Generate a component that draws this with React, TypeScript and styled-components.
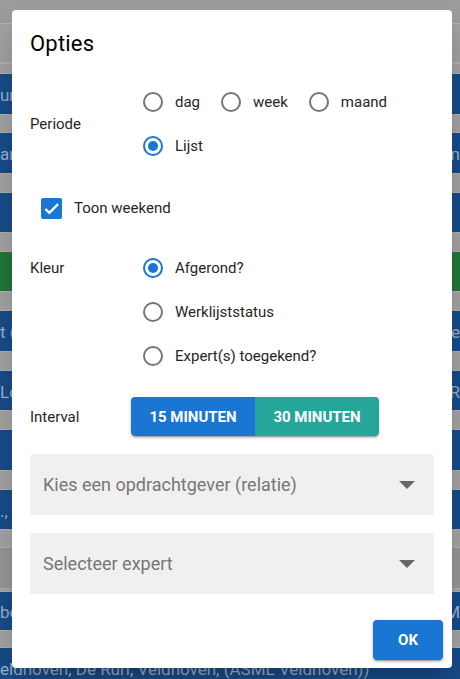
import styled, { createGlobalStyle } from 'styled-components';

const GlobalStyle = createGlobalStyle`
    body {
        margin: 0;
        font-family: Roboto, 'Liberation Sans', sans-serif;
        overflow: hidden;
    }
`;

type BandKind = 'head' | 'bar' | 'sep' | 'blue' | 'green' | 'dim';

interface Band {
    h: number;
    kind: BandKind;
    left?: string;
    right?: string;
}

const bands: Band[] = [
    { h: 23, kind: 'head' },
    { h: 40, kind: 'bar' },
    { h: 11, kind: 'sep' },
    { h: 40, kind: 'blue', left: 'urg' },
    { h: 19, kind: 'sep' },
    { h: 40, kind: 'blue', left: 'ar', right: 'en' },
    { h: 20, kind: 'sep' },
    { h: 39, kind: 'blue' },
    { h: 20, kind: 'sep' },
    { h: 39, kind: 'green' },
    { h: 20, kind: 'sep' },
    { h: 40, kind: 'blue', left: 't (', right: 'ne' },
    { h: 20, kind: 'sep' },
    { h: 39, kind: 'blue', left: 'Lo', right: 'R' },
    { h: 20, kind: 'sep' },
    { h: 40, kind: 'blue' },
    { h: 20, kind: 'sep' },
    { h: 39, kind: 'blue', left: '., 2' },
    { h: 19, kind: 'sep' },
    { h: 40, kind: 'dim' },
    { h: 4, kind: 'sep' },
    { h: 38, kind: 'blue', left: 'bo', right: 'M' },
    { h: 18, kind: 'sep' },
    { h: 40, kind: 'blue', left: 'eldhoven, De Ruri, Veldhoven, (ASML Veldhoven))' },
];

const bandColors: Record<BandKind, string> = {
    head: '#9c9c9c',
    bar: '#a2a2a2',
    sep: '#a5a5a5',
    blue: '#184d8b',
    green: '#23783a',
    dim: '#989898',
};

const App = () => {
    return (
        <>
            <GlobalStyle />
            <Page>
                <Backdrop>
                    {bands.map((b, i) => (
                        <BandRow key={i} $kind={b.kind} style={{ height: b.h }}>
                            <BandText>{b.left}</BandText>
                            <BandText>{b.right}</BandText>
                        </BandRow>
                    ))}
                </Backdrop>

                <Dialog>
                    <Title>Opties</Title>

                    <Section $align='center' $top={22}>
                        <FieldLabel>Periode</FieldLabel>
                        <Options>
                            <OptionLine>
                                <RadioItem label='dag' />
                                <RadioItem label='week' />
                                <RadioItem label='maand' />
                            </OptionLine>
                            <OptionLine>
                                <RadioItem label='Lijst' checked />
                            </OptionLine>
                        </Options>
                    </Section>

                    <CheckRow>
                        <CheckBox>
                            <svg width='21' height='21' viewBox='0 0 24 24'>
                                <path
                                    d='M5 12.5l4.5 4.5L19.5 7'
                                    fill='none'
                                    stroke='#fff'
                                    strokeWidth='2.6'
                                />
                            </svg>
                        </CheckBox>
                        <ItemText>Toon weekend</ItemText>
                    </CheckRow>

                    <Section $align='start' $top={16}>
                        <FieldLabel $pad>Kleur</FieldLabel>
                        <Options>
                            <OptionLine>
                                <RadioItem label='Afgerond?' checked />
                            </OptionLine>
                            <OptionLine>
                                <RadioItem label='Werklijststatus' />
                            </OptionLine>
                            <OptionLine>
                                <RadioItem label='Expert(s) toegekend?' />
                            </OptionLine>
                        </Options>
                    </Section>

                    <IntervalRow>
                        <FieldLabel>Interval</FieldLabel>
                        <ToggleGroup>
                            <ToggleButton $color='#1976d2'>15 Minuten</ToggleButton>
                            <ToggleButton $color='#26a69a'>30 Minuten</ToggleButton>
                        </ToggleGroup>
                    </IntervalRow>

                    <SelectField $top={18}>
                        <SelectText>Kies een opdrachtgever (relatie)</SelectText>
                        <Caret />
                    </SelectField>
                    <SelectField $top={18}>
                        <SelectText>Selecteer expert</SelectText>
                        <Caret />
                    </SelectField>

                    <Footer>
                        <OkButton>OK</OkButton>
                    </Footer>
                </Dialog>
            </Page>
        </>
    );
};

const RadioItem = ({ label, checked }: { label: string; checked?: boolean }) => (
    <RadioWrap>
        <RadioCircle $checked={!!checked}>{checked && <RadioDot />}</RadioCircle>
        <ItemText>{label}</ItemText>
    </RadioWrap>
);

const Page = styled.div`
    position: relative;
    width: 460px;
    height: 679px;
    overflow: hidden;
`;

const Backdrop = styled.div`
    display: flex;
    flex-direction: column;
`;

const BandRow = styled.div<{ $kind: BandKind }>`
    display: flex;
    justify-content: space-between;
    align-items: center;
    flex-shrink: 0;
    background: ${(p) => bandColors[p.$kind]};
    box-shadow: ${(p) =>
        p.$kind === 'sep' || p.$kind === 'bar'
            ? 'inset 0 1px 0 #b2b2b2, inset 0 -1px 0 #b2b2b2'
            : 'none'};
`;

const BandText = styled.span`
    font-size: 17px;
    color: #9db3d0;
    white-space: nowrap;
    padding-top: 2px;
`;

const Dialog = styled.div`
    position: absolute;
    left: 12px;
    top: 10px;
    width: 440px;
    height: 658px;
    box-sizing: border-box;
    padding: 0 9px 0 18px;
    background: #fff;
    border-radius: 4px;
    box-shadow: 0 11px 15px -7px rgba(0, 0, 0, 0.2), 0 24px 38px 3px rgba(0, 0, 0, 0.14);
    display: flex;
    flex-direction: column;
`;

const Title = styled.div`
    margin-top: 20px;
    font-size: 22px;
    line-height: 28px;
    font-weight: 400;
    color: #000;
    letter-spacing: 0.2px;
`;

const Section = styled.div<{ $align: string; $top: number }>`
    display: grid;
    grid-template-columns: 113px 1fr;
    align-items: ${(p) => p.$align};
    margin-top: ${(p) => p.$top}px;
`;

const FieldLabel = styled.div<{ $pad?: boolean }>`
    font-size: 15px;
    color: #262626;
    line-height: ${(p) => (p.$pad ? '44px' : 'normal')};
`;

const Options = styled.div`
    display: flex;
    flex-direction: column;
`;

const OptionLine = styled.div`
    display: flex;
    align-items: center;
    gap: 21px;
    height: 44px;
`;

const RadioWrap = styled.label`
    display: flex;
    align-items: center;
    gap: 12px;
`;

const RadioCircle = styled.span<{ $checked: boolean }>`
    width: 20px;
    height: 20px;
    box-sizing: border-box;
    border-radius: 50%;
    border: 2px solid ${(p) => (p.$checked ? '#1976d2' : '#757575')};
    display: flex;
    align-items: center;
    justify-content: center;
`;

const RadioDot = styled.span`
    width: 10px;
    height: 10px;
    border-radius: 50%;
    background: #1976d2;
`;

const ItemText = styled.span`
    font-size: 15px;
    color: #262626;
`;

const CheckRow = styled.div`
    display: flex;
    align-items: center;
    gap: 12px;
    height: 44px;
    margin-top: 18px;
    padding-left: 11px;
`;

const CheckBox = styled.span`
    width: 21px;
    height: 21px;
    border-radius: 2px;
    background: #1976d2;
    display: flex;
    align-items: center;
    justify-content: center;
`;

const IntervalRow = styled.div`
    display: grid;
    grid-template-columns: 101px auto;
    justify-content: start;
    align-items: center;
    margin-top: 19px;
`;

const ToggleGroup = styled.div`
    display: flex;
    border-radius: 4px;
    overflow: hidden;
    box-shadow: 0 3px 1px -2px rgba(0, 0, 0, 0.2), 0 2px 2px 0 rgba(0, 0, 0, 0.14),
        0 1px 5px 0 rgba(0, 0, 0, 0.12);
`;

const ToggleButton = styled.button<{ $color: string }>`
    width: 124px;
    height: 39px;
    border: none;
    background: ${(p) => p.$color};
    color: #fff;
    font-family: Roboto, 'Liberation Sans', sans-serif;
    font-size: 15px;
    font-weight: 700;
    text-transform: uppercase;
    padding: 0;
`;

const SelectField = styled.div<{ $top: number }>`
    display: flex;
    align-items: center;
    justify-content: space-between;
    height: 61px;
    margin: ${(p) => p.$top}px 9px 0 0;
    padding: 0 19px 0 13px;
    background: #f0f0f0;
    border-radius: 4px 4px 0 0;
`;

const SelectText = styled.span`
    font-size: 18px;
    color: #777;
`;

const Caret = styled.span`
    width: 0;
    height: 0;
    border-left: 8px solid transparent;
    border-right: 8px solid transparent;
    border-top: 8px solid #666;
`;

const Footer = styled.div`
    display: flex;
    justify-content: flex-end;
    margin-top: 26px;
`;

const OkButton = styled.button`
    width: 70px;
    height: 40px;
    border: none;
    border-radius: 4px;
    background: #1976d2;
    color: #fff;
    font-family: Roboto, 'Liberation Sans', sans-serif;
    font-size: 15px;
    font-weight: 700;
    box-shadow: 0 3px 1px -2px rgba(0, 0, 0, 0.2), 0 2px 2px 0 rgba(0, 0, 0, 0.14),
        0 1px 5px 0 rgba(0, 0, 0, 0.12);
`;

export default App;
